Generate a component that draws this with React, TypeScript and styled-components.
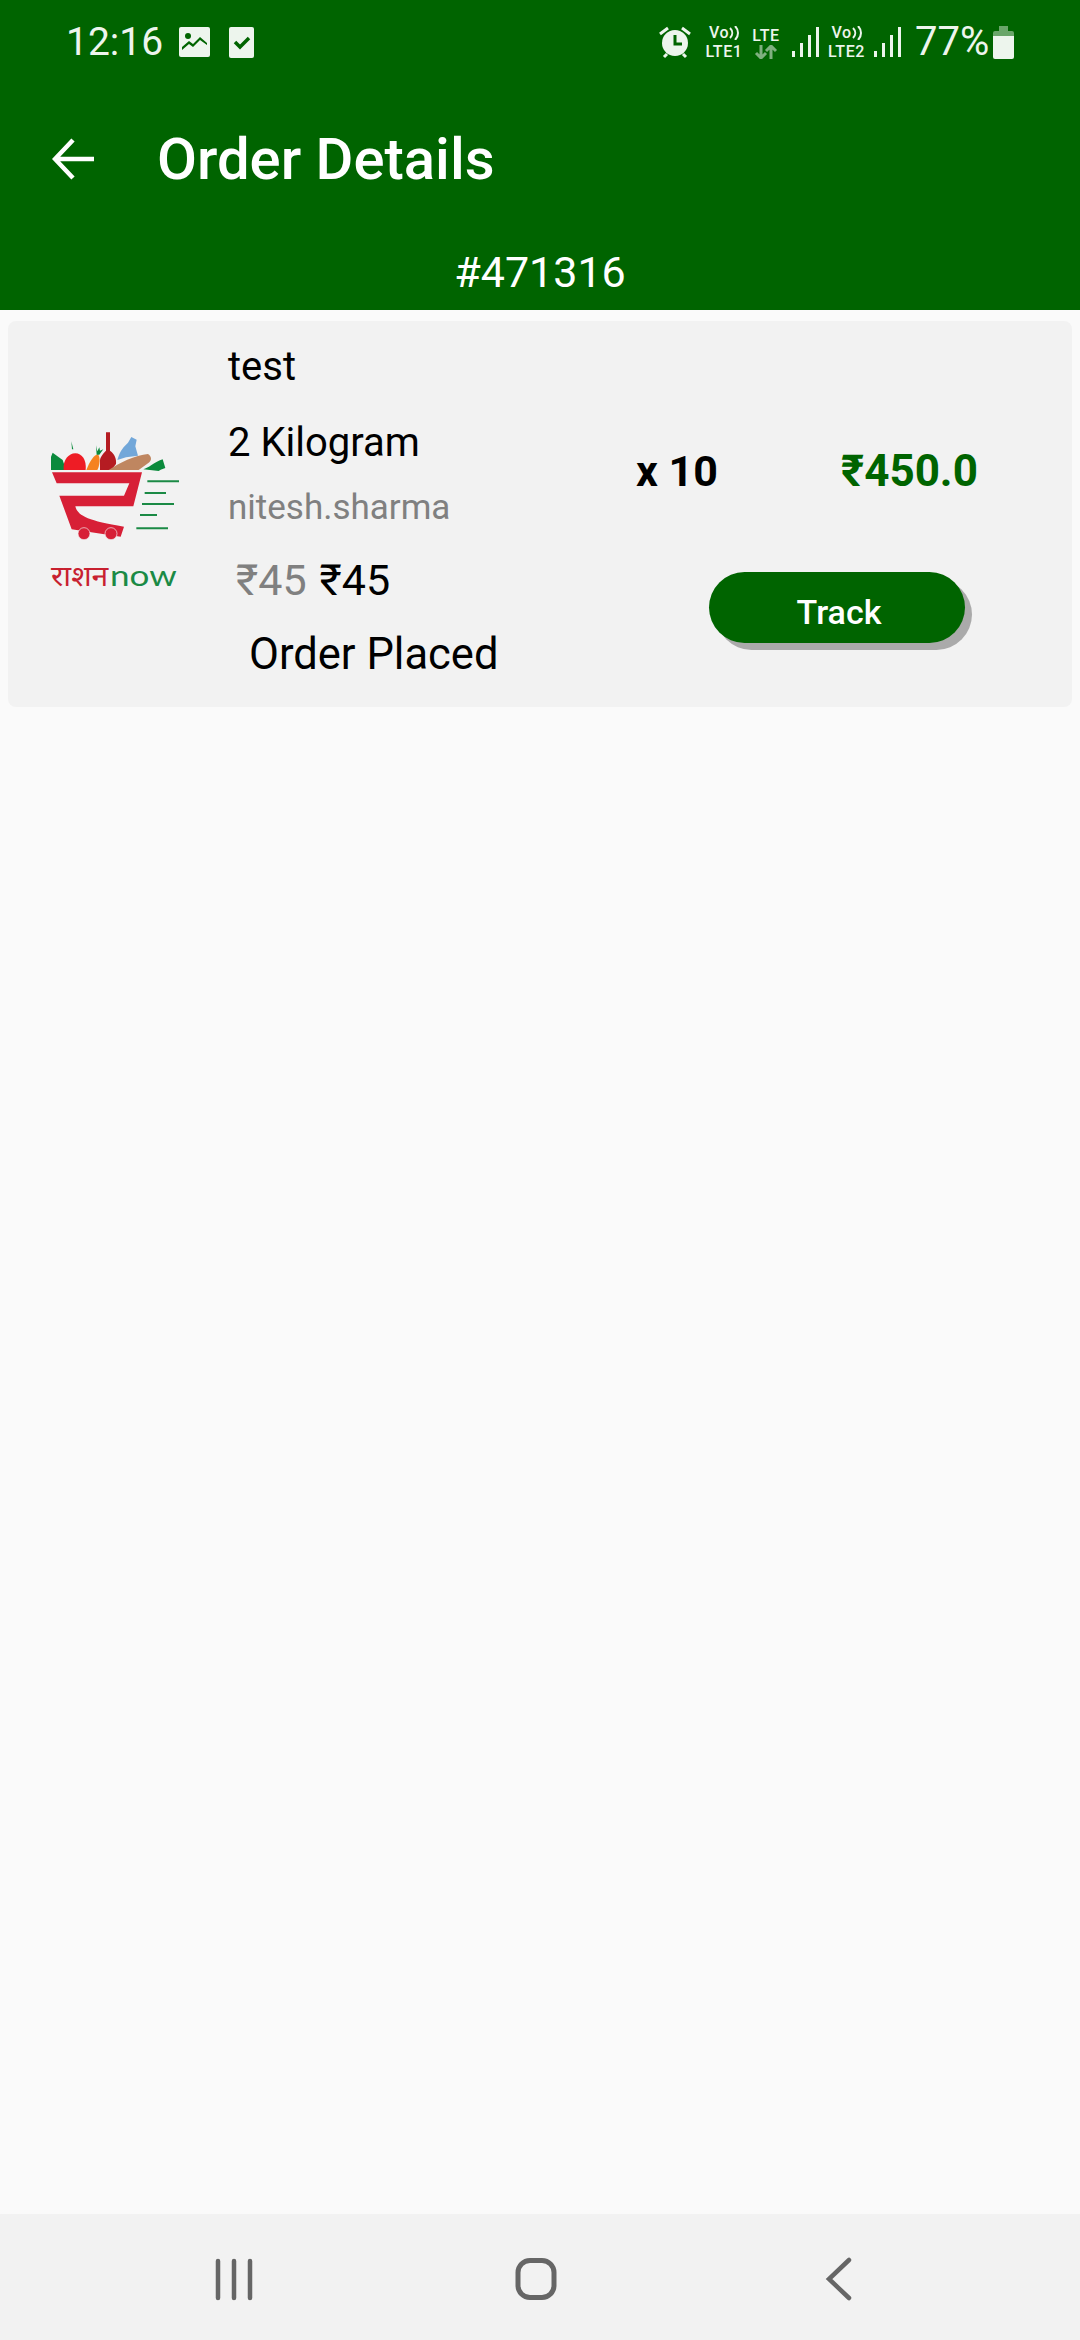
import React from "react";
import styled, { createGlobalStyle } from "styled-components";

const Global = createGlobalStyle`
  html, body { margin: 0; padding: 0; background: #fafafa; }
  * { box-sizing: border-box; }
  body { font-family: Roboto, "Noto Sans", sans-serif; }
`;
const Page = styled.div`
  width: 1080px; height: 2340px; display: flex; flex-direction: column; background: #fafafa;
`;
const Header = styled.header`
  height: 310px; background: #006400; color: #fff; display: flex; flex-direction: column;
`;
const StatusBar = styled.div`
  height: 84px; padding: 0 66px 0 66px; display: flex; align-items: center; justify-content: space-between;
  color: #edf5ed;
`;
const StatusLeft = styled.div`display: flex; align-items: center;`;
const Clock = styled.span`
  font-size: 39px; line-height: 1; width: 113px; white-space: nowrap;
`;
const StatusRight = styled.div`display: flex; align-items: center;`;
const Stack = styled.div<{ $w: number; $ml: number }>`
  width: ${(p) => p.$w}px; margin-left: ${(p) => p.$ml}px; display: flex; flex-direction: column; align-items: center;
  font-size: 16px; font-weight: 500; letter-spacing: 0.6px; white-space: nowrap;
`;
const StackLine = styled.div`
  height: 19px; line-height: 19px; display: flex; align-items: center;
`;
const Percent = styled.span`font-size: 40px; line-height: 1; margin-left: 14px; width: 72px; white-space: nowrap;`;
const Toolbar = styled.div`
  height: 146px; padding: 3px 0 0 52px; display: flex; align-items: center; gap: 63px;
`;
const Title = styled.h1`
  margin: 0; font-size: 58px; font-weight: 500; line-height: 1;
`;
const OrderNo = styled.div`
  margin-top: 17px; text-align: center; font-size: 43px; line-height: 50px;
`;
const Main = styled.main`flex: 1; padding: 11px 8px 0;`;
const Card = styled.section`
  height: 386px; background: #f2f2f2; border-radius: 8px; display: flex;
`;
const LogoCol = styled.div`width: 212px; padding-top: 79px; flex: none;`;
const InfoCol = styled.div`width: 396px; flex: none; padding: 23px 0 0 8px; display: flex; flex-direction: column;`;
const Name = styled.div`font-size: 40px; line-height: 46px; color: #000;`;
const Unit = styled(Name)`margin-top: 30px;`;
const Seller = styled.div`font-size: 35px; line-height: 40px; color: #808080; margin-top: 22px;`;
const Prices = styled.div`display: flex; gap: 13px; margin: 29px 0 0 8px; font-size: 43px; line-height: 46px;`;
const OldPrice = styled.span`color: #808080;`;
const NewPrice = styled.span`color: #000;`;
const Status = styled.div`font-size: 43.5px; line-height: 46px; color: #000; margin: 29px 0 0 21px;`;
const RightCol = styled.div`flex: 1; padding-top: 127px; display: flex; flex-direction: column;`;
const Totals = styled.div`display: flex; font-size: 43px; font-weight: 700; line-height: 46px;`;
const Qty = styled.span`width: 205px; margin-left: 20px; color: #000;`;
const Total = styled.span`color: #006400; font-size: 44px;`;
const Track = styled.button`
  width: 256px; height: 71px; margin: 78px 0 0 93px; border: 0; border-radius: 36px; background: #006400; color: #fff;
  font: 500 34px Roboto, sans-serif; box-shadow: 7px 7px 0 #aaa; padding: 8px 0 0 4px; text-align: center;
`;
const NavBar = styled.nav`
  height: 126px; padding-top: 3px; background: #f2f2f2; display: flex; align-items: center;
`;
const NavIcon = styled.svg<{ $ml: number }>`margin-left: ${(p) => p.$ml}px; flex: none;`;

const Logo = () => (
  <svg width="212" height="200" viewBox="24 0 636 600">
    <path d="M153 210V170l5-12 30 22 10 30z" fill="#0a8a3c" />
    <path d="M191 210c-3-30 15-50 35-50s34 20 31 50z" fill="#ee1c25" />
    <path d="M214 124l6 24-4 0z" fill="#0a8a3c" />
    <path d="M259 210c10-25 22-45 35-47 8 10 5 35-2 47z" fill="#f58220" />
    <path d="M288 136l4 18 6-12 2 10 10-4-12 16-8 0z" fill="#0a8a3c" />
    <path d="M318 97h12v55c14 10 20 25 18 40l-14 18h-34v-30c2-12 12-22 18-28z" fill="#b51c22" />
    <path d="M352 180c8-30 20-40 32-52l10-17 16 8-4 20 8 28-36 5z" fill="#72a7d9" />
    <path d="M326 210c30-20 80-45 118-48 12 8 12 20 0 28l-28 20z" fill="#bf8660" />
    <path d="M430 208c16-4 30-20 58-30l8 26-14 5-6 4z" fill="#0a8a3c" />
    <path d="M156 217H426L400 319H226C232 345 260 362 372 380L362 410L215 388L178 287H372L388 250H170Z" fill="#d71f36" />
    <circle cx="252" cy="401" r="18" fill="#d71f36" stroke="#f2f2f2" strokeWidth="2" />
    <circle cx="333" cy="401" r="18" fill="#d71f36" stroke="#f2f2f2" strokeWidth="2" />
    <path d="M442 244h95M434 279h64M426 312h96M420 345h51M409 385h95" stroke="#1b8a45" strokeWidth="6" />
    <text x="153" y="557" fontSize="88" fill="#c8202f" fontFamily="'Noto Sans', sans-serif" textLength="172" lengthAdjust="spacingAndGlyphs">राशन</text>
    <text x="330" y="557" fontSize="84" fill="#1b8a45" fontFamily="Lato, sans-serif" textLength="200" lengthAdjust="spacingAndGlyphs">now</text>
  </svg>
);

const Alarm = () => (
  <svg width="32" height="34" viewBox="0 0 32 34" style={{ flex: "none" }}>
    <circle cx="16" cy="18" r="13" fill="#edf5ed" />
    <path d="M16 10v9h7" stroke="#006400" strokeWidth="3" fill="none" />
    <path d="M1 9l8-6M31 9l-8-6M5 32l3-3M27 32l-3-3" stroke="#edf5ed" strokeWidth="3" />
  </svg>
);
const Bars = ({ ml }: { ml: number }) => (
  <svg width="27" height="30" viewBox="0 0 27 30" style={{ marginLeft: ml, flex: "none" }}>
    <path d="M0 24h3v6H0zM8 16h3v14H8zM16 8h3v22h-3zM24 0h3v30h-3z" fill="#edf5ed" />
  </svg>
);
const Waves = () => (
  <StackLine>
    Vo<svg width="10" height="14" viewBox="0 0 10 14"><path d="M1 2c3 3 3 7 0 10M6 0c4 4 4 10 0 14" stroke="#edf5ed" strokeWidth="2" fill="none" /></svg>
  </StackLine>
);

export default function App() {
  return (
    <Page>
      <Global />
      <Header>
        <StatusBar>
          <StatusLeft>
            <Clock>12:16</Clock>
            <svg width="31" height="30" viewBox="0 0 31 30">
              <rect width="31" height="30" rx="2" fill="#edf5ed" />
              <path d="M3 20l7-6 4 3 7-7 7 6v2l-7-5-7 7-4-3-7 6z" fill="#006400" />
              <circle cx="9" cy="9" r="3" fill="#006400" />
            </svg>
            <svg width="25" height="31" viewBox="0 0 25 31" style={{ marginLeft: 19 }}>
              <rect width="25" height="31" rx="2" fill="#edf5ed" />
              <path d="M6 15l5 5 9-9" stroke="#006400" strokeWidth="3.5" fill="none" />
            </svg>
          </StatusLeft>
          <StatusRight>
            <Alarm />
            <Stack $w={40} $ml={13}><Waves /><StackLine>LTE1</StackLine></Stack>
            <Stack $w={32} $ml={6}>
              <StackLine>LTE</StackLine>
              <svg width="24" height="14" viewBox="0 0 24 14"><path d="M7 0v12M2 8l5 5 5-5M17 14V2M12 6l5-5 5 5" stroke="#7fb07f" strokeWidth="3" fill="none" /></svg>
            </Stack>
            <Bars ml={10} />
            <Stack $w={41} $ml={7}><Waves /><StackLine>LTE2</StackLine></Stack>
            <Bars ml={7} />
            <Percent>77%</Percent>
            <svg width="21" height="33" viewBox="0 0 21 33" style={{ marginLeft: 6 }}>
              <path d="M6 0h9v5h4a2 2 0 0 1 2 2v5H0V7a2 2 0 0 1 2-2h4z" fill="#6aa66a" />
              <path d="M0 10h21v21a2 2 0 0 1-2 2H2a2 2 0 0 1-2-2z" fill="#edf5ed" />
            </svg>
          </StatusRight>
        </StatusBar>
        <Toolbar>
          <svg width="42" height="42" viewBox="0 0 42 42">
            <path d="M42 21H4M21 2L3 21l18 19" stroke="#fff" strokeWidth="4.5" fill="none" />
          </svg>
          <Title>Order Details</Title>
        </Toolbar>
        <OrderNo>#471316</OrderNo>
      </Header>
      <Main>
        <Card>
          <LogoCol><Logo /></LogoCol>
          <InfoCol>
            <Name>test</Name>
            <Unit>2 Kilogram</Unit>
            <Seller>nitesh.sharma</Seller>
            <Prices><OldPrice>₹45</OldPrice><NewPrice>₹45</NewPrice></Prices>
            <Status>Order Placed</Status>
          </InfoCol>
          <RightCol>
            <Totals><Qty>x 10</Qty><Total>₹450.0</Total></Totals>
            <Track>Track</Track>
          </RightCol>
        </Card>
      </Main>
      <NavBar>
        <NavIcon $ml={215} width="38" height="44" viewBox="0 0 38 44">
          <path d="M3 4v37M19 4v37M35 4v37" stroke="#666" strokeWidth="4.5" strokeLinecap="round" />
        </NavIcon>
        <NavIcon $ml={261} width="44" height="44" viewBox="0 0 44 44">
          <rect x="4" y="3.5" width="36" height="37" rx="12" stroke="#666" strokeWidth="5" fill="none" />
        </NavIcon>
        <NavIcon $ml={267} width="27" height="44" viewBox="0 0 27 44">
          <path d="M24 3L4 22l20 19" stroke="#666" strokeWidth="4.5" strokeLinecap="round" fill="none" />
        </NavIcon>
      </NavBar>
    </Page>
  );
}
